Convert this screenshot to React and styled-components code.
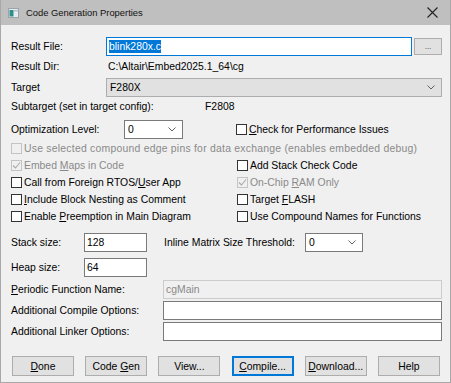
import React from "react";
import styled, { createGlobalStyle } from "styled-components";

const Global = createGlobalStyle`
  html, body { margin: 0; padding: 0; background: #f0f0f0; }
  body { font-family: "Liberation Sans", Arial, sans-serif; font-size: 10.4px; color: #000; }
  * { box-sizing: border-box; }
`;

const Window = styled.div`
  width: 451px;
  height: 383px;
  background: #f0f0f0;
  border: 1px solid #a8a8a8;
  border-top: none;
  display: flex;
  flex-direction: column;
  overflow: hidden;
`;

const TitleBar = styled.div`
  height: 25px;
  flex: none;
  background: #bfbfbf;
  display: flex;
  align-items: center;
  padding: 0 0 0 8px;
  margin: 0 -1px;
`;

const Title = styled.div`
  font-size: 9.4px;
  color: #111;
  margin-left: 7px;
  flex: 1;
`;

const CloseBtn = styled.div`
  width: 30px;
  display: flex;
  justify-content: center;
  align-items: center;
  margin-right: 4px;
`;

const Body = styled.div`
  flex: 1;
  display: flex;
  flex-direction: column;
  padding: 12px 8px 0 10px;
`;

const Row = styled.div`
  display: flex;
  align-items: center;
  height: ${(p) => p.$h || 18}px;
  margin-top: ${(p) => p.$mt || 0}px;
`;

const Label = styled.div`
  width: ${(p) => p.$w}px;
  padding-left: ${(p) => p.$pl || 0}px;
  flex: none;
  color: ${(p) => (p.$disabled ? "#8a8a8a" : "#000")};
  white-space: nowrap;
`;

const Value = styled.div`
  white-space: nowrap;
`;

const TextBox = styled.div`
  height: ${(p) => p.$h || 19}px;
  width: ${(p) => (p.$w ? `${p.$w}px` : "auto")};
  flex: ${(p) => (p.$w ? "none" : "1")};
  background: ${(p) => (p.$disabled ? "#f0f0f0" : "#fff")};
  border: 1px solid ${(p) => (p.$focus ? "#0078d7" : p.$disabled ? "#cccccc" : "#7a7a7a")};
  color: ${(p) => (p.$disabled ? "#8a8a8a" : "#000")};
  display: flex;
  align-items: center;
  padding-left: 2px;
  white-space: nowrap;
`;

const Selected = styled.span`
  background: #0078d7;
  color: #fff;
  padding: 1px 0;
`;

const SmallButton = styled.div`
  width: 28px;
  height: 17px;
  margin-left: 2px;
  background: #e1e1e1;
  border: 1px solid #adadad;
  display: flex;
  justify-content: center;
  align-items: flex-end;
  padding-bottom: 3px;
  font-size: 8px;
  color: #333;
  flex: none;
`;

const Select = styled.div`
  height: 19px;
  width: ${(p) => (p.$w ? `${p.$w}px` : "auto")};
  flex: ${(p) => (p.$w ? "none" : "1")};
  background: ${(p) => (p.$flat ? "#e1e1e1" : "#fff")};
  border: 1px solid ${(p) => (p.$flat ? "#adadad" : "#7a7a7a")};
  display: flex;
  align-items: center;
  padding: 0 6px 0 3px;
`;

const SelectText = styled.div`
  flex: 1;
`;

const Columns = styled.div`
  display: flex;
  align-items: center;
  height: 17px;
  margin-top: ${(p) => p.$mt || 0}px;
`;

const Col = styled.div`
  width: ${(p) => (p.$w ? `${p.$w}px` : "auto")};
  flex: ${(p) => (p.$w ? "none" : "1")};
  display: flex;
  align-items: center;
`;

const CheckWrap = styled.label`
  display: flex;
  align-items: center;
  gap: 2px;
  white-space: nowrap;
  color: ${(p) => (p.$disabled ? "#8a8a8a" : "#000")};
  letter-spacing: ${(p) => (p.$wide ? "0.24px" : "normal")};
`;

const Box = styled.span`
  width: 11px;
  height: 11px;
  flex: none;
  border: 1px solid ${(p) => (p.$disabled ? "#c4c4c4" : "#333")};
  background: ${(p) => (p.$disabled ? "#f0f0f0" : "#fff")};
  display: flex;
  align-items: center;
  justify-content: center;
`;

const U = styled.span`
  text-decoration: underline;
  text-underline-offset: 1px;
`;

const ButtonBar = styled.div`
  display: flex;
  justify-content: space-between;
  margin-top: 15px;
  padding: 0 0 0 1px;
  margin-right: 2px;
`;

const Button = styled.div`
  width: 62px;
  height: 20px;
  background: #e1e1e1;
  border: ${(p) => (p.$default ? "2px solid #0078d7" : "1px solid #adadad")};
  display: flex;
  align-items: center;
  justify-content: center;
  white-space: nowrap;
`;

const Chevron = () => (
  <svg width="8" height="5" viewBox="0 0 8 5">
    <path d="M0.5 0.5 L4 4 L7.5 0.5" fill="none" stroke="#606060" strokeWidth="1" />
  </svg>
);

const Tick = ({ color }) => (
  <svg width="9" height="9" viewBox="0 0 9 9">
    <path d="M1 4.5 L3.5 7 L8 1.5" fill="none" stroke={color} strokeWidth="1.1" />
  </svg>
);

const Check = ({ checked, disabled, wide, children }) => (
  <CheckWrap $disabled={disabled} $wide={wide}>
    <Box $disabled={disabled}>{checked && <Tick color={disabled ? "#a8a8a8" : "#000"} />}</Box>
    <span>{children}</span>
  </CheckWrap>
);

const AppIcon = () => (
  <svg width="11" height="10" viewBox="0 0 11 10">
    <rect x="0.5" y="0.5" width="10" height="9" fill="#e8ecef" stroke="#9aa4ab" />
    <rect x="1.5" y="2" width="4" height="6.5" fill="#2f8f88" />
    <rect x="6" y="2" width="4" height="1.5" fill="#b7c3cb" />
  </svg>
);

const CloseIcon = () => (
  <svg width="11" height="11" viewBox="0 0 11 11">
    <path d="M0.5 0.5 L10.5 10.5 M10.5 0.5 L0.5 10.5" stroke="#222" strokeWidth="1.1" />
  </svg>
);

export default function App() {
  return (
    <>
      <Global />
      <Window>
        <TitleBar>
          <AppIcon />
          <Title>Code Generation Properties</Title>
          <CloseBtn>
            <CloseIcon />
          </CloseBtn>
        </TitleBar>
        <Body>
          <Row $h={19}>
            <Label $w={95}>Result File:</Label>
            <TextBox $focus>
              <Selected>blink280x.c</Selected>
            </TextBox>
            <SmallButton>...</SmallButton>
          </Row>
          <Row $h={20}>
            <Label $w={97}>Result Dir:</Label>
            <Value>C:\Altair\Embed2025.1_64\cg</Value>
          </Row>
          <Row $h={19} $mt={2}>
            <Label $w={95}>Target</Label>
            <Select $flat>
              <SelectText>F280X</SelectText>
              <Chevron />
            </Select>
          </Row>
          <Row $h={18}>
            <Label $w={194}>Subtarget (set in target config):</Label>
            <Value>F2808</Value>
          </Row>
          <Row $h={20} $mt={4}>
            <Label $w={113}>Optimization Level:</Label>
            <Select $w={59}>
              <SelectText>0</SelectText>
              <Chevron />
            </Select>
            <Col $w={53} />
            <Check>
              <U>C</U>heck for Performance Issues
            </Check>
          </Row>
          <Columns $mt={1}>
            <Check disabled wide>
              Use selected compound edge pins for data exchange (enables embedded debug)
            </Check>
          </Columns>
          <Columns>
            <Col $w={226}>
              <Check checked disabled>
                Embed <U>M</U>aps in Code
              </Check>
            </Col>
            <Col>
              <Check>Add Stack Check Code</Check>
            </Col>
          </Columns>
          <Columns>
            <Col $w={226}>
              <Check>
                Call from Foreign RTOS/<U>U</U>ser App
              </Check>
            </Col>
            <Col>
              <Check checked disabled>
                On-Chip <U>R</U>AM Only
              </Check>
            </Col>
          </Columns>
          <Columns>
            <Col $w={226}>
              <Check>
                <U>I</U>nclude Block Nesting as Comment
              </Check>
            </Col>
            <Col>
              <Check>
                Target <U>F</U>LASH
              </Check>
            </Col>
          </Columns>
          <Columns>
            <Col $w={226}>
              <Check>
                Enable <U>P</U>reemption in Main Diagram
              </Check>
            </Col>
            <Col>
              <Check>Use Compound Names for Functions</Check>
            </Col>
          </Columns>
          <Row $h={19} $mt={8}>
            <Label $w={73}>Stack size:</Label>
            <TextBox $w={63}>128</TextBox>
            <Label $w={158} $pl={17}>Inline Matrix Size Threshold:</Label>
            <Select $w={58}>
              <SelectText>0</SelectText>
              <Chevron />
            </Select>
          </Row>
          <Row $h={19} $mt={6}>
            <Label $w={73}>Heap size:</Label>
            <TextBox $w={63}>64</TextBox>
          </Row>
          <Row $h={19} $mt={3}>
            <Label $w={152}>
              <U>P</U>eriodic Function Name:
            </Label>
            <TextBox $disabled>cgMain</TextBox>
          </Row>
          <Row $h={19} $mt={2}>
            <Label $w={152}>Additional Compile Options:</Label>
            <TextBox />
          </Row>
          <Row $h={19} $mt={2}>
            <Label $w={152}>Additional Linker Options:</Label>
            <TextBox />
          </Row>
          <ButtonBar>
            <Button>
              <span>
                <U>D</U>one
              </span>
            </Button>
            <Button>
              <span>
                Code <U>G</U>en
              </span>
            </Button>
            <Button>
              <span>View...</span>
            </Button>
            <Button $default>
              <span>
                <U>C</U>ompile...
              </span>
            </Button>
            <Button>
              <span>
                <U>D</U>ownload...
              </span>
            </Button>
            <Button>
              <span>Help</span>
            </Button>
          </ButtonBar>
        </Body>
      </Window>
    </>
  );
}
